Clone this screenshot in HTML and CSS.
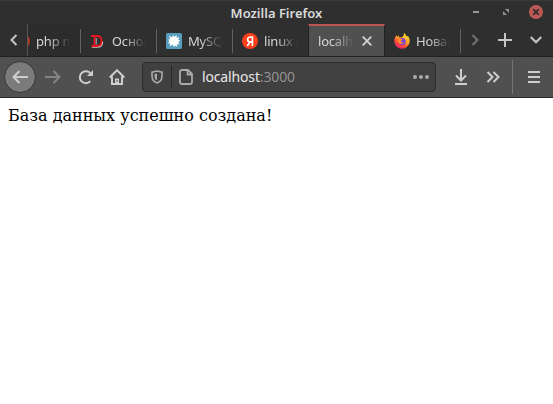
FILE: index.html
```html
<!DOCTYPE html>
<html lang="ru">
<head>
<meta charset="utf-8">
<title>Mozilla Firefox</title>
<link rel="stylesheet" href="styles.css">
</head>
<body>
<div class="window">
  <header class="titlebar">
    <span class="title">Mozilla Firefox</span>
    <div class="controls">
      <svg width="14" height="14" viewBox="0 0 14 14"><path d="M4 7h6" stroke="#979797" stroke-width="2"/></svg>
      <svg width="14" height="14" viewBox="0 0 14 14"><path d="M6 4h4v4zM4 6v4h4z" fill="#929292"/></svg>
      <svg width="14" height="14" viewBox="0 0 14 14"><circle cx="7" cy="7" r="7" fill="#bd5a57"/><path d="M4.2 4.2l5.6 5.6M9.800 4.200l-5.600 5.600" stroke="#352d2d" stroke-width="1.800"/></svg>
    </div>
  </header>
  <div class="tabbar">
    <div class="scroll-left"><svg width="8" height="12" viewBox="0 0 8 12"><path d="M6.500 1l-5 5 5 5" class="line bright"/></svg></div>
    <div class="tabs">
      <div class="tab first">
        <svg class="icon" viewBox="0 0 16 16"><circle cx="8" cy="8" r="8" fill="#b8371e"/></svg>
        <span class="label">php m</span>
      </div>
      <div class="tab">
        <svg class="icon" viewBox="0 0 16 16"><path d="M2 14h6q4.500-.5 4.500-5.500" fill="none" stroke="#ccc" stroke-width="1.500"/><path d="M1 3h6q4.500 0 4.500 5t-4.500 5H1.500M4.500 3v10" fill="none" stroke="#e9141c" stroke-width="1.800"/><path d="M6.200 5v6.500" stroke="#bbb"/></svg>
        <span class="label">Основы</span>
      </div>
      <div class="tab">
        <svg class="icon" viewBox="0 0 16 16"><rect width="16" height="16" rx="1.500" fill="#579dbd"/><path d="M3 2.500l3 2L7 2l1.200 2 2.300-2 .2 2.800 2.800-.8-1.300 2.500 2 1.200-2 1.300 1.500 2.500-2.700-.5.500 2.800-2.500-1.300L8 14l-1.500-2.500-2.700 2 .5-3-2.500-.3 1.700-1.700L2 6.500l2.200-.3z" fill="#fff"/></svg>
        <span class="label">MySQL</span>
      </div>
      <div class="tab">
        <svg class="icon" viewBox="0 0 16 16"><circle cx="8" cy="8" r="8" fill="#fc3f1d"/><path d="M10.400 13V4H8.400C4.700 4 4.800 8.900 8.400 8.900H10.400M8 8.900L5.300 13" fill="none" stroke="#fff" stroke-width="1.700"/></svg>
        <span class="label">linux m</span>
      </div>
      <div class="tab active">
        <span class="label local">localhost</span>
        <svg class="close" width="10" height="10" viewBox="0 0 10 10"><path d="M.7.7l8.600 8.600M9.300.7L.7 9.300" stroke="#d2d2d2" stroke-width="1.800"/></svg>
      </div>
      <div class="tab">
        <svg class="icon" viewBox="0 0 16 16">
          <defs><linearGradient id="fire" x1=".8" y1="0" x2=".2" y2="1"><stop offset="0" stop-color="#fff03a"/><stop offset=".4" stop-color="#ffa426"/><stop offset=".7" stop-color="#ff493b"/><stop offset="1" stop-color="#e01574"/></linearGradient></defs>
          <path d="M.3 8C.3 5 1.500 3.500 2.600 2.300l.5 1.500L5 2.300v2l2 .3L9.500 3 10 0c2 1.500 2.300 3 2.700 3.600L14 3c1.200 1.700 1.700 3 1.700 5.200A7.700 7.700 0 0 1 .3 8z" fill="url(#fire)"/>
          <circle cx="8.200" cy="8.400" r="3.500" fill="#7941d7"/><path d="M4 5.800c2-.8 3 .2 4.800.4L7 8c.3 1.700 2 1.800 3 1-1 2.500-5 3-6-.5z" fill="#ff8b2c"/>
        </svg>
        <span class="label">Новая</span>
      </div>
    </div>
    <div class="tab-tools">
      <svg width="8" height="12" viewBox="0 0 8 12"><path d="M1.500 1l5 5-5 5" class="line dim"/></svg>
      <svg width="14" height="14" viewBox="0 0 14 14"><path d="M7 0v14M0 7h14" class="line bright"/></svg>
      <svg width="12" height="8" viewBox="0 0 12 8"><path d="M.7 1L6 6.300 11.300 1" class="line bright"/></svg>
    </div>
  </div>
  <nav class="navbar">
    <div class="back"><svg width="16" height="14" viewBox="0 0 16 14"><path d="M16 7H1.500M7.500 1l-6 6 6 6" class="line"/></svg></div>
    <svg class="forward" width="16" height="14" viewBox="0 0 16 14"><path d="M0 7h14.500M8.500 1l6 6-6 6" class="line faint"/></svg>
    <svg class="reload" width="16" height="16" viewBox="0 0 16 16"><path d="M12.300 12.200A6 6 0 1 1 12.600 4.500" class="line"/><path d="M15 1v6H9z" fill="#cecece"/></svg>
    <svg class="home" width="16" height="16" viewBox="0 0 16 16"><path d="M.7 8.500L8 1.300l7.300 7.200M3 7.500V15h10V7.500" class="line"/><path d="M6 15V9.500h4V15z" fill="#cecece"/><path d="M8 11v2" stroke="#505050"/></svg>
    <div class="urlbar">
      <svg class="shield" width="12" height="14" viewBox="0 0 12 14"><path d="M6 1l5 1.200V6c0 4-2 6-5 7-3-1-5-3-5-7V2.200z" fill="none" stroke="#aaa" stroke-width="1.600"/><path d="M6 3.500v7C4 9.500 3.500 8 3.500 6V4z" fill="#aaa"/></svg>
      <span class="divider"></span>
      <svg class="page-icon" width="14" height="16" viewBox="0 0 14 16"><path d="M9 1H3Q1 1 1 3v10q0 2 2 2h8q2 0 2-2V5zM8.500 1v4.500H13" fill="none" stroke="#aaa" stroke-width="1.800" stroke-linejoin="round"/></svg>
      <span class="url">localhost<span class="port">:3000</span></span>
      <svg class="dots" width="16" height="4" viewBox="0 0 16 4"><circle cx="2" cy="2" r="2"/><circle cx="8" cy="2" r="2"/><circle cx="14" cy="2" r="2"/></svg>
    </div>
    <svg class="download" width="12" height="16" viewBox="0 0 12 16"><path d="M6 0v11M1 6.500l5 5 5-5M0 15h12" class="line"/></svg>
    <svg class="more" width="14" height="12" viewBox="0 0 14 12"><path d="M1.500 1l5 5-5 5M7.500 1l5 5-5 5" class="line"/></svg>
    <span class="menu-divider"></span>
    <svg class="menu" width="12" height="12" viewBox="0 0 12 12"><path d="M0 1h12M0 6h12M0 11h12" class="line"/></svg>
  </nav>
  <main class="content">База данных успешно создана!</main>
</div>
</body>
</html>
```

FILE: styles.css
```css
* { box-sizing: border-box; }
body { margin: 0; background: #fff; overflow: hidden; }
svg { display: block; flex: none; }
.window { width: 553px; height: 404px; }
.line { fill: none; stroke: #cecece; stroke-width: 2; }
.bright { stroke: #c9c5c5; }
.dim { stroke: #727272; }
.faint { stroke: #858585; }

.titlebar {
  display: grid;
  grid-template-columns: 1fr auto 1fr;
  height: 24px;
  background: #2f2f2f;
  border-top: 1px solid #3a3a3a;
  color: #dadada;
  font: 600 13px/25px "Noto Sans", sans-serif;
}
.title { grid-column: 2; letter-spacing: 0; white-space: nowrap; }
.controls {
  display: flex;
  justify-content: flex-end;
  gap: 16px;
  padding: 4px 10px 0 0;
}

.tabbar {
  display: flex;
  height: 33px;
  background: #2f2f2f;
  border-bottom: 1px solid #202020;
}
.scroll-left {
  display: flex;
  flex: none;
  width: 28px;
  padding: 10px 0 0 10px;
  border-right: 1px solid #555;
}
.tabs { display: flex; flex: none; width: 433px; overflow: hidden; }
.tab {
  display: flex;
  flex: none;
  align-items: center;
  width: 76px;
  padding: 2px 9px 0;
  background: linear-gradient(#616161, #616161) right 5px / 1px 24px no-repeat;
}
.first { width: 53px; padding-left: 0; background-color: #2c2c2c; }
.first .icon { margin-left: -14px; }
.icon { width: 16px; height: 16px; margin-right: 6px; }
.label {
  width: 36px;
  overflow: hidden;
  color: #d5d5d5;
  font: 13px/20px "Noto Sans", sans-serif;
  letter-spacing: -0.2px;
  white-space: nowrap;
  mask-image: linear-gradient(90deg, #000 35%, transparent 95%);
}
.active {
  background: #505050;
  border-top: 2px solid #b95550;
  border-right: 1px solid #222;
  border-left: 1px solid #222;
  margin-left: -1px;
  width: 77px;
  height: 32px;
  padding-top: 0;
}
.local { width: 38px; }
.close { margin-left: 6px; }
.tab-tools {
  display: flex;
  align-items: center;
  flex: 1;
  gap: 18px;
  padding-left: 10px;
}
.tab-tools svg:nth-child(n + 2) { margin-left: 0.5px; }

.navbar {
  display: flex;
  align-items: center;
  height: 41px;
  padding: 0 13px 1px 4px;
  background: #505050;
  border-bottom: 1px solid #29272a;
}
.back {
  display: grid;
  place-items: center;
  flex: none;
  width: 32px;
  height: 32px;
  background: #7b7b7b;
  border: 1px solid #353535;
  border-radius: 50%;
}
.forward { margin-left: 9px; }
.reload { margin-left: 16.5px; }
.home { margin-left: 15.5px; }
.urlbar {
  display: flex;
  align-items: center;
  flex: none;
  width: 294px;
  height: 30px;
  margin-left: 17px;
  padding: 0 6px 0 8px;
  background: #404040;
  border: 1px solid #2b2b2b;
  border-radius: 4px;
}
.divider { width: 1px; height: 22px; margin: 0 8px 0 8px; background: #282828; }
.page-icon { margin-left: -1px; }
.url {
  margin-left: 9px;
  color: #e8e8e8;
  font: 14px/22px "Noto Sans", sans-serif;
  letter-spacing: -0.15px;
  white-space: nowrap;
}
.port { color: #929292; }
.dots { margin-left: auto; fill: #aaa; }
.download { margin-left: 19px; }
.more { margin-left: 19px; }
.menu-divider { width: 1px; height: 34px; margin-left: 12px; background: #767676; }
.menu { margin-left: 15px; }

.content {
  padding: 8px;
  color: #000;
  font: 16px/19px "DejaVu Serif", serif;
}
```
